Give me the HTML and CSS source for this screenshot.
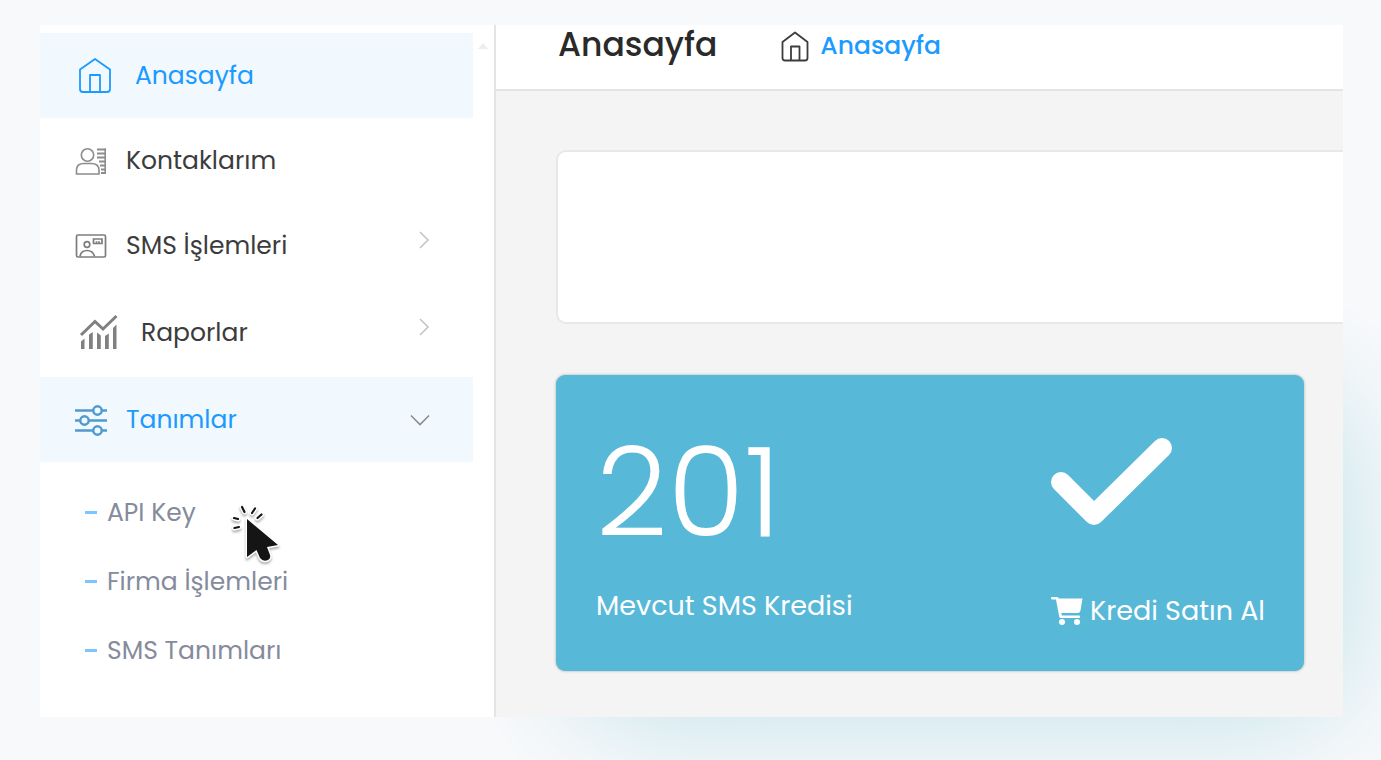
FILE: index.html
```
<!DOCTYPE html>
<html lang="tr">
<head>
    <meta charset="UTF-8">
    <meta name="viewport" content="width=device-width, initial-scale=1.0">
    <title>Anasayfa</title>
    <link rel="stylesheet" href="styles.css">
</head>
<body>
    <div class="panel">
        <aside class="sidebar">
            <nav class="menu">
                <a href="#" class="menu-item active">
                    <svg class="icon-home" viewBox="0 0 41 37" fill="none" stroke="currentColor" stroke-width="1.8" stroke-linejoin="round">
                        <path d="M5 12.500 L20 2 L35 12.500 V32 Q35 35 32 35 H8 Q5 35 5 32 Z"/>
                        <path d="M15 35 V18 H25 V35"/>
                    </svg>
                    <span>Anasayfa</span>
                </a>
                <a href="#" class="menu-item">
                    <svg class="icon" viewBox="0 0 32 32" fill="none" stroke="#8c8c8c" stroke-width="1.600">
                        <circle cx="12.500" cy="10" r="6.200"/>
                        <path d="M1.500 29 V25 Q1.500 18.500 9 18.500 H16 Q24 18.500 24 25 V29 Z"/>
                        <path d="M22 4.500 H31 M22 8.500 H31 M22 12.500 H31 M24 16.500 H31 M25 20.500 H31 M26 24.500 H31 M26 28 H31" stroke-width="2.200"/>
                        <path d="M30.200 3.500 V29"/>
                    </svg>
                    <span>Kontaklarım</span>
                </a>
                <button type="button" class="menu-item">
                    <svg class="icon" viewBox="0 0 32 32" fill="none" stroke="#7d7d7d" stroke-width="1.700">
                        <rect x="1.500" y="5" width="29" height="22" rx="1.500"/>
                        <circle cx="12" cy="14.500" r="2.800"/>
                        <path d="M5 26.500 Q6 20.500 12 20.500 Q18 20.500 19.500 26.500"/>
                        <path d="M18.500 9 H27 V13.500 H18.500 Z M21.500 11.300 V13.500 M24 11.300 V13.500"/>
                    </svg>
                    <span>SMS İşlemleri</span>
                    <svg class="chevron" viewBox="0 0 20 20"><path d="M6 2 L14 10 L6 18"/></svg>
                </button>
                <button type="button" class="menu-item">
                    <svg class="icon-report" viewBox="0 0 47 41" fill="none" stroke="#808080">
                        <path d="M6 23 L20 9.500 L28 17 L41.500 4" stroke-width="3"/>
                        <path d="M6 29.500 L9.500 26.500 V37 H6 Z M14 22.500 L17.800 20 V37 H14 Z M22 20.500 L25.800 23.500 V37 H22 Z M30 24 L33.800 21.500 V37 H30 Z M38 16 L41.500 12.500 V37 H38 Z" fill="#808080" stroke="none"/>
                    </svg>
                    <span>Raporlar</span>
                    <svg class="chevron" viewBox="0 0 20 20"><path d="M6 2 L14 10 L6 18"/></svg>
                </button>
                <button type="button" class="menu-item active" aria-expanded="true">
                    <svg class="icon" viewBox="0 0 32 32" fill="none" stroke="#4f9bd0" stroke-width="2.400">
                        <path d="M0 6.500 H18 M27 6.500 H32 M0 16.500 H5 M14 16.500 H32 M0 26.500 H18 M27 26.500 H32"/>
                        <circle cx="22.500" cy="6.500" r="4.200"/>
                        <circle cx="9.500" cy="16.500" r="4.200"/>
                        <circle cx="22.500" cy="26.500" r="4.200"/>
                    </svg>
                    <span>Tanımlar</span>
                    <svg class="chevron open" viewBox="0 0 20 20"><path d="M1 5.500 L10 14.500 L19 5.500"/></svg>
                </button>
                <ul class="submenu">
                    <li>
                        <a href="#">API Key</a>
                        <svg class="pointer" viewBox="0 0 56 66">
                            <g fill="none" stroke-linecap="round">
                                <path d="M14 7 L16.500 12 M27 8.500 L24 13 M33.500 14.500 L29.500 18 M6 18 L10 19 M6.500 28 L11 27" stroke="#fff" stroke-width="5"/>
                                <path d="M14 7 L16.500 12 M27 8.500 L24 13 M33.500 14.500 L29.500 18 M6 18 L10 19 M6.500 28 L11 27" stroke="#151515" stroke-width="2.200"/>
                            </g>
                            <path d="M19 19 V57 L28.500 50 L32 58 Q35 62 40 60 Q43 58 42 55 L39 47 L50 45 Z" fill="#151515" stroke="#fff" stroke-width="3" stroke-linejoin="round" paint-order="stroke"/>
                        </svg>
                    </li>
                    <li><a href="#">Firma İşlemleri</a></li>
                    <li><a href="#">SMS Tanımları</a></li>
                </ul>
            </nav>
            <div class="scroll-gutter"></div>
        </aside>

        <div class="content">
            <header class="topbar">
                <h1>Anasayfa</h1>
                <a href="#" class="breadcrumb">
                    <svg viewBox="0 0 28 32" fill="none" stroke="#3c3c3c" stroke-width="1.800" stroke-linejoin="round">
                        <path d="M1.500 12 L14 2.500 L26.500 12 V28 Q26.500 30.500 24 30.500 H4 Q1.500 30.500 1.500 28 Z"/>
                        <path d="M10 30.500 V16.500 H18.500 V30.500"/>
                    </svg>
                    <span>Anasayfa</span>
                </a>
            </header>
            <main>
                <section class="blank-card"></section>
                <section class="credit-card">
                    <div class="amount">201</div>
                    <svg class="check" viewBox="0 0 122 102" fill="none" stroke="#fff" stroke-width="20" stroke-linecap="round" stroke-linejoin="round">
                        <path d="M10 51 L43 84 L111 17"/>
                    </svg>
                    <p>Mevcut SMS Kredisi</p>
                    <a href="#" class="buy">
                        <svg viewBox="0 0 32 30" fill="#fff">
                            <path d="M1 1 H6 Q7.500 1 7.800 2.500 H31.500 L29.500 14.500 Q29 17 26.500 17 H10.300 L10.800 19.500 H28 Q29.200 19.500 29.200 20.800 Q29.200 22 28 22 H10 Q8.500 22 8.200 20.500 L5 3.500 H1 Q0 3.500 0 2.200 Q0 1 1 1 Z"/>
                            <circle cx="11" cy="26" r="3"/>
                            <circle cx="26" cy="26" r="3"/>
                        </svg>
                        <span>Kredi Satın Al</span>
                    </a>
                </section>
            </main>
        </div>
    </div>
</body>
</html>
```
FILE: styles.css
```
* {
    box-sizing: border-box;
}

body {
    margin: 0;
    padding: 25px 38px 43px 40px;
    min-height: 100vh;
    background: #f8f9fb;
    font-family: 'Poppins', 'Inter', sans-serif;
    font-size: 25px;
    color: #3c3c3c;
}

a {
    color: inherit;
    text-decoration: none;
}

.panel {
    position: relative;
    display: flex;
}

/* soft blue glow behind the lower right corner */
.panel::before {
    content: "";
    position: absolute;
    z-index: -1;
    top: 390px;
    right: 30px;
    bottom: 30px;
    left: 43%;
    border-radius: 60px;
    box-shadow: 0 0 110px 45px #c8e5ec;
}

.sidebar {
    flex: 0 0 456px;
    display: flex;
    background: #fff;
    border-right: 2px solid #e4e4e4;
}

.menu {
    flex: 1;
    padding-top: 8px;
}

.menu-item {
    display: flex;
    align-items: center;
    gap: 19px;
    width: 100%;
    padding: 24px 39px 24px 35px;
    border: none;
    background: none;
    font: inherit;
    line-height: 37px;
    color: #3c3c3c;
    text-align: left;
    cursor: pointer;
}

.menu-item.active {
    background: #f1f8fe;
    color: #1b9aff;
}

.icon {
    width: 32px;
    height: 32px;
}

.icon-home {
    width: 41px;
    height: 37px;
}

.icon-report {
    width: 47px;
    height: 41px;
}

.chevron {
    width: 20px;
    height: 20px;
    margin-left: auto;
    margin-bottom: 12px;
    fill: none;
    stroke: #c4c4c4;
    stroke-width: 1.6;
}

.chevron.open {
    margin-bottom: 0;
    margin-right: 4px;
    stroke: #8c8c8c;
}

.submenu {
    list-style: none;
    margin: 0;
    padding: 16px 0 1px 45px;
}

.submenu li {
    position: relative;
    display: flex;
    align-items: center;
    gap: 10px;
    line-height: 69px;
    color: #858b9c;
}

.submenu li::before {
    content: "";
    width: 12px;
    height: 3px;
    background: #7cc6ff;
}

.pointer {
    position: absolute;
    left: 143px;
    top: 22px;
    width: 56px;
    height: 66px;
    z-index: 1;
    filter: drop-shadow(0 2px 1px rgba(0, 0, 0, 0.3));
}

.scroll-gutter {
    width: 21px;
    padding: 18px 0 0 5px;
}

.scroll-gutter::before {
    content: "";
    display: block;
    width: 0;
    border: 5px solid transparent;
    border-top: none;
    border-bottom: 6px solid #ededed;
}

.content {
    flex: 1;
    min-width: 0;
    background: #f4f4f4;
}

.topbar {
    display: flex;
    align-items: flex-start;
    gap: 64px;
    height: 66px;
    padding-left: 62px;
    background: #fff;
    border-bottom: 2px solid #e4e4e4;
}

.topbar h1 {
    margin: 0;
    font-size: 33px;
    font-weight: 500;
    line-height: 40px;
    color: #2a2a2a;
}

.breadcrumb {
    display: flex;
    align-items: center;
    gap: 11px;
    font-weight: 500;
    line-height: 42px;
    color: #1b9aff;
}

.breadcrumb svg {
    width: 28px;
    height: 32px;
}

main {
    padding: 59px 39px 46px 60px;
}

.blank-card {
    height: 174px;
    margin-right: -39px;
    margin-bottom: 51px;
    background: #fff;
    border: 2px solid #e8e8e8;
    border-right: none;
    border-radius: 10px 0 0 10px;
}

.credit-card {
    display: grid;
    grid-template-columns: 1fr auto;
    row-gap: 30px;
    padding: 56px 39px 34px 40px;
    background: #58b8d8;
    border-radius: 9px;
    box-shadow: 0 0 3px rgba(0, 0, 0, 0.3);
    color: #fff;
}

.amount {
    font-size: 125px;
    font-weight: 300;
    line-height: 124px;
}

.check {
    width: 122px;
    height: 102px;
}

.credit-card p {
    margin: 0;
    font-size: 27px;
    line-height: 42px;
}

.buy {
    display: flex;
    align-items: center;
    gap: 7px;
    font-size: 27px;
    line-height: 52px;
}

.buy svg {
    width: 32px;
    height: 30px;
}
```
